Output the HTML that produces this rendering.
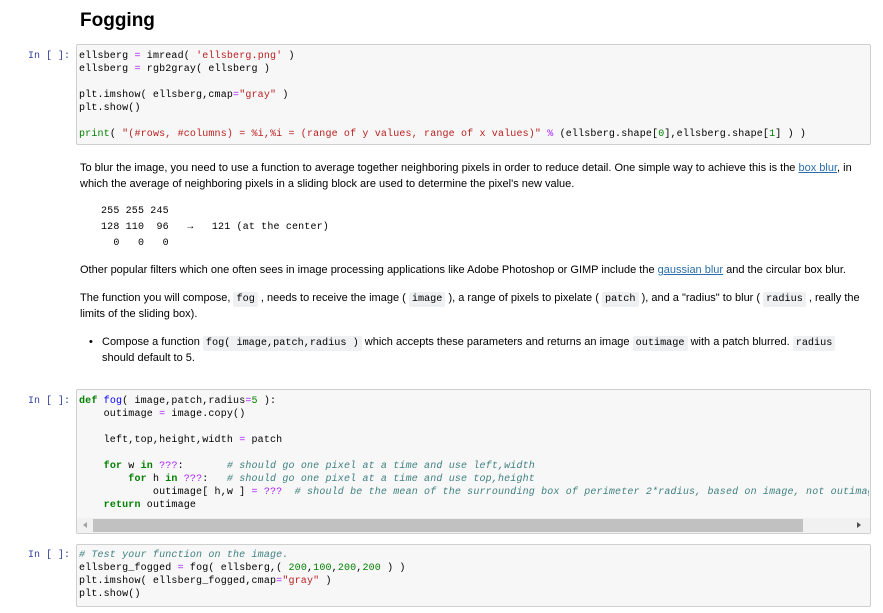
<!DOCTYPE html>
<html><head><meta charset="utf-8"><style>
body{margin:0;width:883px;height:613px;background:#fff;position:relative;overflow:hidden;font-family:"Liberation Sans",Arial,sans-serif;color:#000}
.a{position:absolute;white-space:pre}
.p{font-family:"Liberation Mono",monospace;font-size:10px;color:#303F9F;line-height:13px}
.box{position:absolute;left:76px;width:793px;background:#f7f7f7;border:1px solid #cfcfcf;border-radius:2px}
.c{position:absolute;left:79px;font-family:"Liberation Mono",monospace;font-size:10px;letter-spacing:0.16px;line-height:13px;white-space:pre;color:#000}
.k{color:#008000;font-weight:bold}.o{color:#AA22FF}.s{color:#BA2121}.n{color:#008000}.cm{color:#408080;font-style:italic}.f{color:#0000FF}.b{color:#008000}
.t{font-size:11px;line-height:16px}
.m{font-family:"Liberation Mono",monospace;font-size:10px;letter-spacing:0.16px;line-height:13px}
code{font-family:"Liberation Mono",monospace;font-size:10.2px;background:#eff0f1;padding:2px 3px;border-radius:2px}
a{color:#296eaa;text-decoration:underline}
</style></head><body>
<div class="a" style="left:80px;top:10px;font-size:19px;font-weight:bold">Fogging</div>

<div class="a p" style="left:28px;top:50px">In [ ]:</div>
<div class="box" style="top:44px;height:99px"></div>
<div class="c" style="top:50px">ellsberg <span class="o">=</span> imread( <span class="s">'ellsberg.png'</span> )
ellsberg <span class="o">=</span> rgb2gray( ellsberg )

plt.imshow( ellsberg,cmap<span class="o">=</span><span class="s">"gray"</span> )
plt.show()

<span class="b">print</span>( <span class="s">"(#rows, #columns) = %i,%i = (range of y values, range of x values)"</span> <span class="o">%</span> (ellsberg.shape[<span class="n">0</span>],ellsberg.shape[<span class="n">1</span>] ) )</div>

<div class="a t" style="left:80px;top:160px">To blur the image, you need to use a function to average together neighboring pixels in order to reduce detail. One simple way to achieve this is the <a>box blur</a>, in</div>
<div class="a t" style="left:80px;top:176px">which the average of neighboring pixels in a sliding block are used to determine the pixel's new value.</div>
<div class="a m" style="left:101px;top:205px">255 255 245</div>
<div class="a m" style="left:101px;top:221px">128 110  96   →   121 (at the center)</div>
<div class="a m" style="left:101px;top:237px">  0   0   0</div>
<div class="a t" style="left:80px;top:262px">Other popular filters which one often sees in image processing applications like Adobe Photoshop or GIMP include the <a>gaussian blur</a> and the circular box blur.</div>
<div class="a t" style="left:80px;top:290px">The function you will compose, <code>fog</code> , needs to receive the image ( <code>image</code> ), a range of pixels to pixelate ( <code>patch</code> ), and a "radius" to blur ( <code>radius</code> , really the</div>
<div class="a t" style="left:80px;top:306px">limits of the sliding box).</div>
<div class="a t" style="left:89px;top:334px">•</div>
<div class="a t" style="left:102px;top:334px">Compose a function <code>fog( image,patch,radius )</code> which accepts these parameters and returns an image <code>outimage</code> with a patch blurred. <code>radius</code></div>
<div class="a t" style="left:102px;top:350px">should default to 5.</div>

<div class="a p" style="left:28px;top:395px">In [ ]:</div>
<div class="box" style="top:389px;height:143px;overflow:hidden">
<div style="position:absolute;left:0;right:0;top:128px;height:15px;background:#f1f1f1"></div>
<div style="position:absolute;left:16px;width:710px;top:129px;height:13px;background:#c1c1c1"></div>
<div style="position:absolute;left:6px;top:132px;width:0;height:0;border-top:3.5px solid transparent;border-bottom:3.5px solid transparent;border-right:4px solid #a3a3a3"></div>
<div style="position:absolute;left:780px;top:132px;width:0;height:0;border-top:3.5px solid transparent;border-bottom:3.5px solid transparent;border-left:4px solid #505050"></div>
</div>
<div class="c" style="top:395px;width:790px;overflow:hidden"><span class="k">def</span> <span class="f">fog</span>( image,patch,radius<span class="o">=</span><span class="n">5</span> ):
    outimage <span class="o">=</span> image.copy()

    left,top,height,width <span class="o">=</span> patch

    <span class="k">for</span> w <span class="k">in</span> <span class="o">???</span>:       <span class="cm"># should go one pixel at a time and use left,width</span>
        <span class="k">for</span> h <span class="k">in</span> <span class="o">???</span>:   <span class="cm"># should go one pixel at a time and use top,height</span>
            outimage[ h,w ] <span class="o">=</span> <span class="o">???</span>  <span class="cm"># should be the mean of the surrounding box of perimeter 2*radius, based on image, not outimage</span>
    <span class="k">return</span> outimage</div>

<div class="a p" style="left:28px;top:549px">In [ ]:</div>
<div class="box" style="top:544px;height:61px"></div>
<div class="c" style="top:549px"><span class="cm"># Test your function on the image.</span>
ellsberg_fogged <span class="o">=</span> fog( ellsberg,( <span class="n">200</span>,<span class="n">100</span>,<span class="n">200</span>,<span class="n">200</span> ) )
plt.imshow( ellsberg_fogged,cmap<span class="o">=</span><span class="s">"gray"</span> )
plt.show()</div>
</body></html>
